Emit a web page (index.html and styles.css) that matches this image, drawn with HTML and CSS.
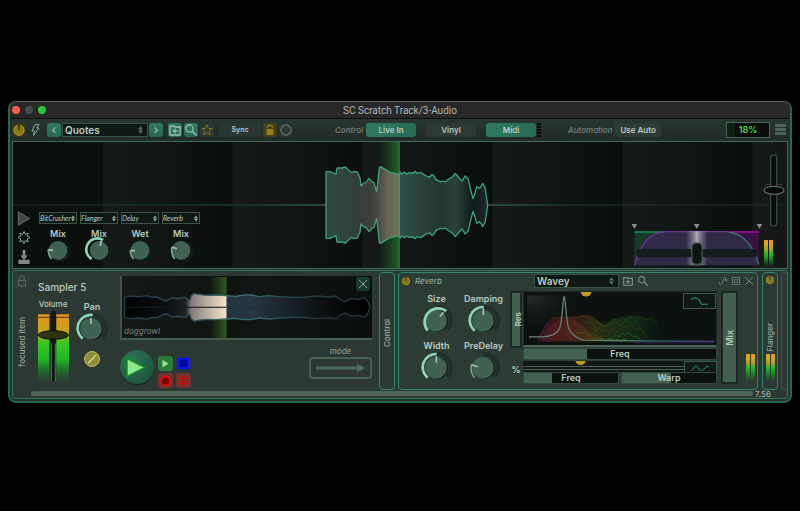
FILE: index.html
```html
<!DOCTYPE html>
<html lang="en">
<head>
<meta charset="utf-8">
<title>SC Scratch Track/3-Audio</title>
<link rel="stylesheet" href="styles.css">
</head>
<body>
<svg width="0" height="0" class="defs" aria-hidden="true">
  <defs>
    <linearGradient id="knobFill" x1="0" y1="0" x2="1" y2="1"><stop offset="0" stop-color="#3d6052"/><stop offset="1" stop-color="#446354"/></linearGradient>
    <symbol id="arrows" viewBox="0 0 6 9"><path d="M0 4 3 0l3 4zM0 5h6L3 9z" fill="currentColor"/></symbol>
    <symbol id="folder" viewBox="0 0 14 14"><path d="M2 3h4l1 1h5v8H2zM7 5.500v5M4.500 8h5" fill="none" stroke="currentColor" stroke-width="1.300"/></symbol>
    <symbol id="search" viewBox="0 0 14 14"><circle cx="5.500" cy="5.500" r="3.600" fill="none" stroke="currentColor" stroke-width="1.200"/><path d="M8.200 8.200 12.500 12.500" stroke="currentColor" stroke-width="1.600"/></symbol>
    <symbol id="power" viewBox="0 0 14 14"><circle cx="7" cy="7" r="5.500" fill="#877718"/><path d="M4.500 3a5 5 0 1 0 5 0" fill="none" stroke="#ab9723" stroke-width="1"/><path d="M7 1.500V7" stroke="#282b12" stroke-width="1.400"/></symbol>
    <symbol id="cross" viewBox="0 0 10 10"><path d="M1 1l8 8M9 1 1 9" stroke="currentColor" fill="none"/></symbol>
    <symbol id="knobBig" viewBox="0 0 96 84">
      <path d="M46 6A41 41 0 0 1 80 74" fill="none" stroke="#202d28" stroke-width="11"/>
      <circle cx="50" cy="48" r="32" fill="#15211c"/><circle cx="45" cy="47" r="32" fill="url(#knobFill)"/>
    </symbol>
  </defs>
</svg>
<main class="window">
  <header class="titlebar">
    <div class="lights"><i class="red"></i><i class="grey"></i><i class="green"></i></div>
    <h1>SC Scratch Track/3-Audio</h1>
    <div></div>
  </header>

  <nav class="toolbar" aria-label="Track">
    <div class="group">
      <button class="icon amber" aria-label="Power"><svg><use href="#power"/></svg></button>
      <button class="icon" aria-label="Flash"><svg viewBox="0 0 14 14"><path d="M7 1.500h4L8.500 5H11L5.500 12.500 6.500 8H4z" fill="none" stroke="#8ba79c"/></svg></button>
    </div>
    <div class="group preset">
      <button class="icon fill" aria-label="Previous">‹</button>
      <span class="pick"><select aria-label="Preset"><option>Quotes</option></select><svg><use href="#arrows"/></svg></span>
      <button class="icon fill" aria-label="Next">›</button>
    </div>
    <div class="group">
      <button class="icon fill" aria-label="Save"><svg><use href="#folder"/></svg></button>
      <button class="icon fill" aria-label="Search"><svg><use href="#search"/></svg></button>
      <button class="icon dim" aria-label="Favourite"><svg viewBox="0 0 14 14"><path d="M7 1.800 8.400 5.400 12.300 5.600 9.300 8 10.300 11.800 7 9.700 3.700 11.800 4.700 8 1.700 5.600 5.600 5.400z" fill="none" stroke="#80711e"/></svg></button>
    </div>
    <div class="group">
      <button class="sync">Sync</button>
      <button class="icon gold" aria-label="Lock"><svg viewBox="0 0 14 14"><path d="M3.500 6h7v6h-7z" fill="#927d18"/><path d="M4 4.500c1-3 5-3 6 0" fill="none" stroke="#927d18" stroke-width="1.300"/></svg></button>
      <button class="icon dim" aria-label="Record arm"><svg viewBox="0 0 14 14"><circle cx="7" cy="7" r="5" fill="none" stroke="#5d6a65" stroke-width="1.300"/></svg></button>
    </div>
    <div class="group modes">
      <span class="cap">Control</span>
      <button class="mode on">Live In</button>
      <button class="mode">Vinyl</button>
      <button class="mode on">Midi</button>
      <span class="dots"></span>
    </div>
    <div class="group auto"><span class="cap">Automation</span><button class="use">Use Auto</button></div>
    <div class="group end">
      <output class="percent">18%</output>
      <button class="menu" aria-label="Menu"><i></i><i></i><i></i></button>
    </div>
  </nav>

  <section class="deck">
    <svg class="layer" viewBox="-891 6 2322 378" preserveAspectRatio="none" aria-hidden="true">
      <defs>
        <linearGradient id="body" gradientUnits="userSpaceOnUse" x1="48" x2="532" y1="0" y2="0">
          <stop offset="0" stop-color="#2e4a41"/><stop offset=".18" stop-color="#304038"/><stop offset=".27" stop-color="#3c3d3c"/><stop offset=".32" stop-color="#474844"/><stop offset=".38" stop-color="#65645a"/><stop offset=".455" stop-color="#6b7458"/><stop offset=".458" stop-color="#2c5148"/><stop offset=".6" stop-color="#294139"/><stop offset=".72" stop-color="#22362f"/><stop offset=".8" stop-color="#2a433b"/><stop offset=".91" stop-color="#101a1a"/><stop offset="1" stop-color="#1c282d"/>
        </linearGradient>
        <linearGradient id="head"><stop offset="0" stop-color="#1c6528" stop-opacity="0"/><stop offset=".8" stop-color="#1f6429" stop-opacity=".75"/><stop offset="1" stop-color="#23732b"/></linearGradient>
        <linearGradient id="mid" gradientUnits="userSpaceOnUse" x1="-891" x2="1431" y1="0" y2="0"><stop offset="0" stop-color="#12221f"/><stop offset=".3" stop-color="#1c3932"/><stop offset=".4" stop-color="#315a4d"/><stop offset=".62" stop-color="#315a4d"/><stop offset=".72" stop-color="#1a2f2d"/><stop offset="1" stop-color="#172426"/></linearGradient>
        <path id="hull" d="M48 195V95H60L78 103 81 84H95L106 81 112 87 125 98 132 94 142 96 150 113 153 138 160 130 168 128 177 115 187 126 192 128 200 155 203 130 208 82 212 80 225 88 240 97 256 100 266 103 271 96 275 103 283 97 290 102 297 98 310 99 315 94 321 100 332 97 342 104 351 109 360 111 366 103 371 107 378 118 392 126 397 123 405 126 420 115 426 112 436 100 445 111 456 124 465 108 475 118 482 150 489 176 494 163 500 140 508 145 513 140 518 130 525 142 531 180 533 195"/>
      </defs>
      <path d="M-891 195H1431" stroke="url(#mid)" stroke-width="5"/>
      <path d="M205 6h65v378h-65z" fill="url(#head)"/>
      <g fill="url(#body)" stroke="#3f9e7a" stroke-width="4" stroke-linejoin="round"><use href="#hull"/><use href="#hull" transform="matrix(1 0 0 -1 0 390)"/></g>
      <path d="M265 104h5v182h-5z" fill="#727f5b"/>
    </svg>
    <div class="overlay">
      <div class="tools">
        <button aria-label="Play"><svg viewBox="0 0 14 16"><path d="M1 1v14l12-7z" fill="#454845" stroke="#6d726e"/></svg></button>
        <button aria-label="Settings"><svg viewBox="0 0 14 14"><path d="M7 1 8.300 3.800 11.200 2.800 10.200 5.700 13 7 10.200 8.300 11.200 11.200 8.300 10.200 7 13 5.700 10.200 2.800 11.200 3.800 8.300 1 7 3.800 5.700 2.800 2.800 5.700 3.800z" fill="none" stroke="#83a39a"/></svg></button>
        <button aria-label="Import"><svg viewBox="0 0 14 16"><path d="M5.500 1h3v6h2.500L7 11.500 3 7h2.500zM1 11.500h12V16H1z" fill="#838a86"/></svg></button>
      </div>
      <div class="sends">
        <div class="send"><span class="pick tiny"><select aria-label="Effect 1"><option>BitCrusher</option></select><svg><use href="#arrows"/></svg></span><label>Mix<svg class="small" viewBox="0 0 84 66"><circle cx="49" cy="34" r="31" fill="#111b17"/><circle cx="42" cy="31" r="28" fill="url(#knobFill)"/><path d="M23 57Q12 45 13 29" class="arc thin"/><path d="M13 29l14 2" class="hand"/></svg><input class="hit" type="range" value="18"></label></div>
        <div class="send"><span class="pick tiny"><select aria-label="Effect 2"><option>Flanger</option></select><svg><use href="#arrows"/></svg></span><label>Mix<svg class="small" viewBox="0 0 84 66"><circle cx="49" cy="34" r="31" fill="#111b17"/><circle cx="42" cy="31" r="28" fill="url(#knobFill)"/><path d="M20 57A33 33 0 0 1 54 0" class="arc"/><path d="M49 3l-4 14" class="hand"/></svg><input class="hit" type="range" value="54"></label></div>
        <div class="send"><span class="pick tiny"><select aria-label="Effect 3"><option>Delay</option></select><svg><use href="#arrows"/></svg></span><label>Wet<svg class="small" viewBox="0 0 84 66"><circle cx="49" cy="34" r="31" fill="#111b17"/><circle cx="42" cy="31" r="28" fill="url(#knobFill)"/><path d="M23 57Q12 45 13 31" class="arc thin"/><path d="M13 32h14" class="hand"/></svg><input class="hit" type="range" value="17"></label></div>
        <div class="send"><span class="pick tiny"><select aria-label="Effect 4"><option>Reverb</option></select><svg><use href="#arrows"/></svg></span><label>Mix<svg class="small" viewBox="0 0 84 66"><circle cx="49" cy="34" r="31" fill="#111b17"/><circle cx="42" cy="31" r="28" fill="url(#knobFill)"/><path d="M23 57Q11 42 15 21" class="arc thin"/><path d="M15 21l14 5" class="hand"/></svg><input class="hit" type="range" value="23"></label></div>
      </div>
      <label class="fader" aria-label="Crossfader"><svg viewBox="62 245 395 138" aria-hidden="true">
        <defs><linearGradient id="glow"><stop offset="0" stop-color="#fff" stop-opacity="0"/><stop offset=".35" stop-color="#fff" stop-opacity=".35"/><stop offset=".5" stop-color="#fff" stop-opacity=".6"/><stop offset=".65" stop-color="#fff" stop-opacity=".35"/><stop offset="1" stop-color="#fff" stop-opacity="0"/></linearGradient></defs>
        <path d="M72 276h186v102H72z" fill="#163a2b"/><path d="M258 276h187v102H258z" fill="#3a1240"/>
        <path d="M72 378Q98 279 165 277H355Q415 280 445 378z" fill="#312a46"/>
        <path d="M72 278H160" stroke="#147c48" stroke-width="6"/><path d="M355 278h90" stroke="#870e80" stroke-width="6"/>
        <path d="M72 378Q98 279 165 277H355" fill="none" stroke="#70359a" stroke-width="4"/><path d="M355 279Q415 282 445 375" fill="none" stroke="#37746e" stroke-width="4"/>
        <path d="M226 276h66v102h-66z" fill="url(#glow)"/>
        <rect x="78" y="329" width="362" height="25" rx="10" fill="#141c1d"/>
        <rect x="244" y="311" width="31" height="64" rx="12" fill="#0c1512" stroke="#465a50" stroke-width="4"/>
        <path d="M63 254h17l-8 14zM250 254h17l-8 14zM438 254h17l-8 14z" fill="#899087"/>
      </svg><input class="hit" type="range" value="50"></label>
      <div class="level">
        <label class="pitch" aria-label="Pitch"><svg viewBox="456 40 72 225" aria-hidden="true"><path d="M465 134h53" stroke="#4b3254" stroke-width="3"/><rect x="482" y="46" width="18" height="213" rx="8" fill="#080d0b" stroke="#33493f" stroke-width="4"/><ellipse cx="492" cy="152" rx="30" ry="12" fill="#050807" stroke="#4f6c5f" stroke-width="4"/></svg><input class="hit" type="range" value="50"></label>
        <div class="meter"><i></i><i></i></div>
      </div>
    </div>
  </section>

  <section class="rack">
    <div class="modules">
      <aside class="side">
        <button aria-label="Lock focus"><svg viewBox="0 0 14 14"><path d="M3.500 6.500h7V12h-7zM4.800 6V3.500Q7 0 9.200 3.500V6" fill="none" stroke="#596a62"/></svg></button>
        <span class="turn">focused item</span>
      </aside>
      <section class="sampler">
        <h2>Sampler 5</h2>
        <div class="cols">
          <label class="volume">Volume<svg viewBox="104 135 102 225" aria-hidden="true">
            <defs><linearGradient id="vu" x2="0" y2="1"><stop offset="0" stop-color="#e79018"/><stop offset=".25" stop-color="#c9a51f"/><stop offset=".42" stop-color="#35c920"/><stop offset=".65" stop-color="#1cb925"/><stop offset="1" stop-color="#1f7429" stop-opacity="0"/></linearGradient></defs>
            <path d="M110 148h34v208h-34zM165 148h38v208h-38z" fill="url(#vu)"/><path d="M108 157h96" stroke="#4c3d16" stroke-width="3"/><rect x="148" y="137" width="16" height="219" rx="8" fill="#111815"/><path d="M150 235v114q6 12 12 0V235" fill="none" stroke="#56705f" stroke-width="3"/><ellipse cx="156" cy="210" rx="45" ry="13" fill="#2f3310" stroke="#0b1009" stroke-width="3"/></svg><input class="hit" type="range" value="70"></label>
          <div class="pan">
            <label class="knob">Pan<svg viewBox="0 0 96 84"><use href="#knobBig"/><path d="M20 77A40 40 0 0 1 50 6" class="arc"/><path d="M45 16v16" class="hand"/></svg><input class="hit" type="range" value="50"></label>
            <button class="bypass" aria-label="Bypass"><svg viewBox="0 0 18 18"><circle cx="9" cy="9" r="7.500" fill="#8f8d3c" stroke="#c2bf5f"/><path d="M5 13l8-8" stroke="#d9d678" stroke-width="1.500"/></svg></button>
          </div>
        </div>
      </section>
      <section class="clip">
        <div class="view">
          <svg class="layer" viewBox="20 33 748 186" preserveAspectRatio="none" aria-hidden="true">
            <defs>
              <linearGradient id="dogfill" gradientUnits="userSpaceOnUse" x1="28" x2="762" y1="0" y2="0"><stop offset="0" stop-color="#020303"/><stop offset=".18" stop-color="#0b1012"/><stop offset=".25" stop-color="#1d2325"/><stop offset=".27" stop-color="#807c78"/><stop offset=".35" stop-color="#c4b8aa"/><stop offset=".414" stop-color="#f7e0c8"/><stop offset=".416" stop-color="#223544"/><stop offset=".52" stop-color="#273640"/><stop offset=".75" stop-color="#101719"/><stop offset=".9" stop-color="#050707"/><stop offset="1" stop-color="#000"/></linearGradient>
              <linearGradient id="doghead"><stop offset="0" stop-color="#315719" stop-opacity="0"/><stop offset="1" stop-color="#31571d"/></linearGradient>
              <linearGradient id="dogline" gradientUnits="userSpaceOnUse" x1="28" x2="762" y1="0" y2="0"><stop offset="0" stop-color="#263844"/><stop offset=".3" stop-color="#39545d"/><stop offset=".45" stop-color="#3a716d"/><stop offset=".65" stop-color="#2c5259"/><stop offset=".8" stop-color="#29373f"/></linearGradient>
              <path id="dog" d="M28 127V97L45 93 70 95 95 92 110 97 125 96 140 104 152 108 170 99 190 100 210 97 222 108 228 92 235 86 270 91 300 90 330 92 360 94 385 90 408 90 430 95 460 92 490 95 530 97 560 97 600 93 640 96 660 93 675 105 688 110 705 101 730 103 745 97 755 108 762 127"/>
            </defs>
            <path d="M283 36h50v183h-50z" fill="url(#doghead)"/>
            <g fill="url(#dogfill)" stroke="url(#dogline)" stroke-width="4"><use href="#dog"/><use href="#dog" transform="matrix(1 0 0 -1 0 254)"/></g>
            <path d="M30 127H332" stroke="#141b1d" stroke-width="3"/>
          </svg>
          <div class="viewtop"><button class="close" aria-label="Close"><svg><use href="#cross"/></svg></button><span class="file">doggrowl</span></div>
        </div>
        <div class="transport">
          <button class="bigplay" aria-label="Play sample"><svg viewBox="0 0 34 34"><path d="M7 8.500v18L25 17.500z" fill="#8ee98b" stroke="#168d22" stroke-width="1.500"/></svg></button>
          <div class="pads">
            <button class="p-go" aria-label="Loop"><svg viewBox="0 0 15 15"><path d="M4.500 4v7.500l6-3.700z" fill="#96ea91"/></svg></button>
            <button class="p-stop" aria-label="Stop"><svg viewBox="0 0 15 15"><path d="M3 3h9v9H3z" fill="#00079b" stroke="#0713f2" stroke-width="2"/></svg></button>
            <button class="p-rec" aria-label="Record"><svg viewBox="0 0 15 15"><circle cx="7.500" cy="8" r="4.500" fill="#7d0303" stroke="#f50808" stroke-width="1.500"/></svg></button>
            <button class="p-del" aria-label="Delete"><svg viewBox="0 0 15 15"><path d="M5.500 3.500h4M3 5.500h9M4.500 8h6M3 10.500h9M5.500 12.500h4" stroke="#d80808" stroke-width="1.200" fill="none"/><path d="M7.500 3v10" stroke="#c00606" stroke-width="2"/></svg></button>
          </div>
          <div class="direction"><span class="cap">mode</span><button aria-label="Direction"><svg viewBox="0 0 50 10"><path d="M0 3.500h41V0.500L49.500 5 41 9.500V6.500H0z" fill="#4c6a5d"/></svg></button></div>
        </div>
      </section>
      <button class="slot"><span class="turn">Control</span></button>
      <section class="effect">
        <header>
          <button class="mini" aria-label="Reverb power"><svg><use href="#power"/></svg></button>
          <h3>Reverb</h3>
          <span class="pick wavey"><select aria-label="Reverb preset"><option>Wavey</option></select><svg><use href="#arrows"/></svg></span>
          <button class="sq" aria-label="Save preset"><svg><use href="#folder"/></svg></button>
          <button class="sq" aria-label="Find preset"><svg><use href="#search"/></svg></button>
          <div class="fxicons">
            <button class="sq" aria-label="Modulation"><svg viewBox="0 0 14 14"><path d="M1.500 8Q2.500 13 4 12 6 11 7 7T9 2t2 4 2-2" fill="none" stroke="currentColor" stroke-width="1.300"/></svg></button>
            <button class="sq" aria-label="Expand"><svg viewBox="0 0 14 14"><path d="M2 2h10v10H2zM5 5h4v4H5z" fill="none" stroke="currentColor" stroke-width="1.300"/></svg></button>
            <button class="sq" aria-label="Remove"><svg><use href="#cross"/></svg></button>
          </div>
        </header>
        <div class="fxbody">
          <div class="knobs">
            <label class="knob">Size<svg viewBox="0 0 96 84"><use href="#knobBig"/><path d="M20 77A41 41 0 0 1 76 18" class="arc"/><path d="M68 22 57 34" class="hand"/></svg><input class="hit" type="range" value="65"></label>
            <label class="knob">Damping<svg viewBox="0 0 96 84"><use href="#knobBig"/><path d="M20 77A40 40 0 0 1 47 6" class="arc"/><path d="M46 10v20" class="hand"/></svg><input class="hit" type="range" value="50"></label>
            <label class="knob">Width<svg viewBox="0 0 96 84"><use href="#knobBig"/><path d="M20 77A40 40 0 0 1 47 6" class="arc"/><path d="M46 12v20" class="hand"/></svg><input class="hit" type="range" value="50"></label>
            <label class="knob">PreDelay<svg viewBox="0 0 96 84"><use href="#knobBig"/><path d="M20 77Q6 62 10 37" class="arc thin"/><path d="M11 38l18 6" class="hand"/></svg><input class="hit" type="range" value="24"></label>
          </div>
          <div class="vside">
            <label class="vbar"><span class="turn">Res</span><input class="hit" type="range" value="100"></label>
            <span class="pc">%</span>
          </div>
          <div class="filters">
            <div class="graph">
              <svg viewBox="40 81 578 162" preserveAspectRatio="none" aria-hidden="true">
                <defs>
                  <linearGradient id="spec" gradientUnits="userSpaceOnUse" x1="80" x2="470" y1="0" y2="0"><stop offset="0" stop-color="#4c1c45"/><stop offset=".12" stop-color="#5c1f1e"/><stop offset=".35" stop-color="#57301a"/><stop offset=".45" stop-color="#4c4b13"/><stop offset=".6" stop-color="#29491a"/><stop offset=".78" stop-color="#143a1e"/><stop offset="1" stop-color="#0c1d14" stop-opacity="0"/></linearGradient>
                  <linearGradient id="floor" gradientUnits="userSpaceOnUse" x1="50" x2="612" y1="0" y2="0"><stop offset="0" stop-color="#718079"/><stop offset=".5" stop-color="#537a65"/><stop offset=".7" stop-color="#2c5c5c"/><stop offset="1" stop-color="#533b8a"/></linearGradient>
                  <radialGradient id="haze" cx="0" cy="0" r="1"><stop offset="0" stop-color="#262e2b"/><stop offset="1" stop-color="#0b110e" stop-opacity="0"/></radialGradient>
                </defs>
                <path d="M50 92h180v120H50z" fill="url(#haze)"/>
                <path d="M82 222 105 180 130 158 190 157 215 151 240 155 260 168 285 182 310 162 345 157 375 151 400 160 430 163 455 185 465 215 440 233H82z" fill="url(#spec)" opacity=".5"/>
                <path d="M95 225 110 190 140 168 190 165 225 190 245 215 290 230H95z" fill="url(#spec)" opacity=".6"/>
                <g fill="none" stroke="url(#spec)" stroke-width="2"><path d="M82 225 110 175 130 157 160 162 200 157 235 152 255 164 265 178 290 186 310 175 330 182 350 170 370 176 395 160 420 168 440 185 455 210"/><path d="M220 168 230 175 240 170 250 185 256 200 266 192 276 201 286 196 296 206 310 192 320 202 331 195 340 186 350 190 360 180 375 196 390 190 410 222" stroke="#404016"/><path d="M170 215 180 205 190 212 200 205 216 208 225 203 235 214 246 207 256 213 265 221 275 215" stroke="#6b4f12"/><path d="M265 180 280 172 295 178 308 162 320 175 335 160 345 170 358 155 370 165 385 160 395 152 410 165 425 160 440 180" stroke="#20401a"/><path d="M300 230 315 212 325 218 335 206 345 212 355 205 370 219 380 215 393 232" stroke="#1f6a36"/></g>
                <path d="M265 231l10-8 10 8 14-9 10 9 12-5 10 6 12-7 10 6" fill="none" stroke="#5f7818" stroke-width="2"/>
                <path d="M370 235H612" stroke="#231d42" stroke-width="7"/>
                <path d="M55 218H95Q137 217 148 190C156 166 157 94 161 94S166 166 174 190Q185 219 220 228L360 230 612 232" fill="none" stroke="url(#floor)" stroke-width="4"/>
                <path d="M211 81a16 14 0 0 0 32 0z" fill="#c19a25"/>
              </svg>
              <button class="shape" aria-label="Low pass"><svg viewBox="0 0 30 13"><path d="M7 5Q10 2 14 4 16 5 17 8T20 10H25" fill="none" stroke="#279368" stroke-width="1.300"/></svg></button>
            </div>
            <label class="bar f1"><span>Freq</span><input class="hit" type="range" value="33"></label>
            <div class="strip"><svg viewBox="0 0 192 9" preserveAspectRatio="none" aria-hidden="true"><path d="M52 0a5 4 0 0 0 10 0z" fill="#c19a25"/><path d="M0 5.500h192M0 8.500h192" stroke="#496457"/></svg><button class="shape low" aria-label="Band pass"><svg viewBox="0 0 30 8"><path d="M6 8Q8 7 9.500 4.500T12 3 16 8M17 8Q19 7 21 4.500 22.500 2 25 4" fill="none" stroke="#279368"/></svg></button></div>
            <div class="pair"><label class="bar f2"><span>Freq</span><input class="hit" type="range" value="30"></label><label class="bar f3"><span>Warp</span><input class="hit" type="range" value="50"></label></div>
          </div>
          <label class="vbar mix"><span class="turn">Mix</span><input class="hit" type="range" value="100"></label>
          <div class="meter"><i></i><i></i></div>
        </div>
      </section>
      <section class="slot flanger">
        <button class="mini" aria-label="Flanger power"><svg><use href="#power"/></svg></button>
        <span class="turn">Flanger</span>
        <div class="meter"><i></i><i></i></div>
      </section>
      <div class="stub"></div>
    </div>
    <footer><div class="scroll"></div><span>7.56</span></footer>
  </section>
</main>
</body>
</html>
```

FILE: styles.css
```css
* { box-sizing: border-box; margin: 0; }

body {
  padding: 101px 8px 0;
  background: #000;
  color: #b7ccc1;
  font: 500 9px/12px Inter, "Open Sans", sans-serif;
}

.defs { position: absolute; }
svg { display: block; }
button { border: 0; padding: 0; background: none; color: inherit; font: inherit; }
label { position: relative; }
.hit { position: absolute; inset: 0; width: 100%; height: 100%; opacity: 0; }

.window {
  border: 2px solid #28664f;
  border-top: 1px solid #626262;
  border-radius: 8px;
  overflow: hidden;
  background: #25312d;
}

.titlebar {
  display: grid;
  grid-template-columns: 1fr auto 1fr;
  align-items: center;
  height: 17px;
  background: #282828;
  border-bottom: 1px solid #0b0e0d;
}
.titlebar h1 { color: #b3b3b3; font: 400 10px/15px Roboto, sans-serif; }
.lights { display: flex; gap: 5px; padding-left: 2px; }
.lights i { width: 8px; height: 8px; border-radius: 50%; }
.red { background: #fb5b51; }
.grey { background: #474b49; }
.green { background: #2ac536; }

.toolbar {
  display: flex;
  align-items: center;
  height: 22px;
  padding: 0 4px 1px 2px;
  background: linear-gradient(#283530, #212b28);
}
.group { display: flex; align-items: center; gap: 2px; }
.group + .group { margin-left: 5px; }
.toolbar .modes { margin-left: 42px; gap: 10px; }
.toolbar .auto { margin-left: 27px; gap: 3px; }
.toolbar .end { margin-left: auto; gap: 5px; }

.icon {
  display: grid;
  place-items: center;
  width: 14px;
  height: 14px;
  border-radius: 3px;
  font-size: 12px;
  line-height: 12px;
}
.icon svg { width: 14px; height: 14px; }
.fill { background: linear-gradient(#2f7a60, #286851); color: #9ebfb2; }
.dim { background: #2b3834; }
.amber { background: #353818; }
.gold { background: #41401b; }
.sync { width: 42px; height: 14px; background: #2a3632; font-size: 7px; font-weight: 600; }
.preset { gap: 1px; }
.cap { color: #73807b; font-size: 8px; font-style: italic; }

.pick {
  display: flex;
  align-items: center;
  width: 86px;
  height: 14px;
  padding-right: 4px;
  border: 1px solid #385448;
  background: #101815;
}
.pick select {
  flex: 1;
  min-width: 0;
  padding: 0 0 0 2px;
  border: 0;
  appearance: none;
  background: none;
  color: #b7ccc1;
  font: 600 10px/12px Inter, sans-serif;
}
.pick svg { width: 5px; height: 8px; color: #577365; }

.mode {
  width: 50px;
  height: 14px;
  border-radius: 3px;
  background: #2c3935;
  font-size: 8px;
  font-weight: 600;
}
.on { background: linear-gradient(90deg, #2d7a61, #286c56); }
.modes .cap + .mode { margin-left: -7px; }
.dots { width: 4px; height: 14px; margin-left: -9px; background: repeating-linear-gradient(#050807 0 2px, #26322f 2px 3px); }
.use { height: 14px; padding: 0 5px; border-radius: 3px; background: #2e3b37; color: #b7ccc1; font-size: 8px; font-weight: 600; }
.percent {
  width: 44px;
  height: 16px;
  border: 1px solid #48675a;
  background: linear-gradient(90deg, #0d2012 18%, #090e0c 18%);
  color: #50d355;
  font-weight: 600;
  line-height: 14px;
  text-align: center;
}
.menu { display: grid; gap: 1px; width: 11px; }
.menu i { height: 3px; background: #4d625a; }

.deck {
  display: grid;
  height: 128px;
  margin: 0 2px;
  border: 1px solid #40695a;
  background: linear-gradient(90deg, #0b0f0e 90px, transparent 90px), repeating-linear-gradient(90deg, #161a18 90px, #0a0e0d 219px, #161a18 220px);
}
.layer, .overlay { grid-area: 1 / 1; min-width: 0; }
.layer { width: 100%; height: 100%; }
.overlay { display: flex; align-items: flex-end; padding: 0 1px 1px 4px; }
.tools { display: grid; gap: 4px; width: 15px; padding-bottom: 3px; }
.tools button, .tools svg { width: 14px; height: 15px; }
.sends { display: flex; gap: 3px; margin: 0 auto 5px 7px; }
.send { width: 38px; }
.tiny { width: 38px; height: 12px; padding-right: 1px; }
.tiny select { padding: 0; font: italic 400 7px/10px Lato, sans-serif; text-overflow: clip; }
.tiny svg { width: 4px; height: 7px; color: #90a99d; }
.send label { display: grid; justify-items: center; margin-top: 4px; font-weight: 600; line-height: 12px; }
.small { width: 28px; height: 22px; overflow: visible; }
.arc { fill: none; stroke: #8dd6b4; stroke-width: 8; }
.arc.thin { stroke: #6fa78d; stroke-width: 5; }
.hand { fill: none; stroke: #adbdb4; stroke-width: 5; }
.fader svg { width: 132px; height: 46px; }
.level { display: grid; align-content: end; justify-items: center; width: 24px; gap: 12px; margin-left: -1px; }
.pitch svg { width: 24px; height: 75px; }
.meter {
  display: flex;
  gap: 1px;
  width: 9px;
  height: 27px;
}
.meter i { flex: 1; background: linear-gradient(#eb9416, #d8a820 15%, #a2a223 35%, #29bc21 50%, #1a9825 65%, transparent); }
.level .meter { margin-right: 12px; }

.rack {
  margin: 1px 2px 2px;
  border: 1px solid #2c795c;
  border-radius: 3px;
  background: #2b3833;
}
.modules { display: flex; height: 119px; padding-top: 1px; }
.side { display: flex; flex-direction: column; align-items: center; gap: 29px; width: 18px; padding-top: 2px; color: #8fa69a; font-size: 8px; }
.side button { background: #313d39; border-radius: 2px; }
.side svg { width: 14px; height: 14px; }
.turn { writing-mode: vertical-rl; transform: rotate(180deg); white-space: nowrap; }

.sampler { width: 82px; padding-left: 5px; }
.sampler h2 { padding: 9px 0 5px 2px; font-size: 10px; line-height: 12px; font-weight: 500; }
.cols { display: flex; gap: 6px; }
.volume { display: grid; justify-items: center; width: 34px; font-size: 8px; line-height: 12px; }
.volume svg { width: 34px; height: 75px; }
.pan { display: grid; align-content: start; justify-items: center; gap: 9px; padding-top: 3px; }
.knob { display: grid; justify-items: center; font-weight: 600; line-height: 12px; }
.knob svg { width: 32px; height: 28px; }
.bypass svg { width: 18px; height: 18px; }

.clip { width: 252px; margin-left: 7px; padding-top: 4px; }
.view {
  display: grid;
  height: 64px;
  border-left: 2px solid #3e5448;
  border-bottom: 2px solid #465d50;
  background: linear-gradient(90deg, #151a18, #0e1412 40%, #111513 55%, #0a0f0d);
}
.viewtop { grid-area: 1 / 1; display: grid; align-content: space-between; padding: 1px 2px; }
.close { justify-self: end; display: grid; place-items: center; width: 14px; height: 14px; border-radius: 3px; background: #173b2f; color: #93a59c; }
.close svg { width: 10px; height: 10px; }
.file { color: #6a726d; font-size: 8px; font-style: italic; line-height: 12px; }
.transport { display: flex; padding-top: 5px; }
.bigplay { width: 34px; height: 34px; margin-top: 5px; border-radius: 50%; background: radial-gradient(circle at 35% 30%, #2a7657, #1c4b37); box-shadow: 0 1px 1px #18221e; }
.pads { display: grid; grid-template-columns: 15px 15px; gap: 2px 3px; align-content: start; margin: 11px 0 0 4px; }
.pads button { height: 15px; border-radius: 3px; }
.pads svg { width: 15px; height: 15px; }
.p-go { background: #2b7a39; }
.p-stop { background: #27334b; }
.p-rec, .p-del { background: #75312d; }
.direction { display: grid; align-content: start; justify-items: center; width: 63px; margin-left: auto; }
.direction .cap { color: #82978c; }
.direction button { width: 63px; height: 22px; border: 2px solid #466154; border-radius: 4px; display: grid; place-items: center; }
.direction svg { width: 50px; height: 10px; }

.slot {
  width: 16px;
  height: 118px;
  margin-left: 7px;
  border: 1px solid #31876a;
  border-radius: 4px;
  color: #94aa9f;
  font-size: 8px;
}
.slot .turn { margin: 8px auto 0; }

.effect { flex: 1; height: 118px; margin-left: 3px; border: 1px solid #31876a; border-radius: 4px; background: #2d3b35; }
.effect header { display: flex; align-items: center; height: 16px; padding: 0 1px 0 2px; }
.mini svg { width: 10px; height: 10px; }
.effect h3 { margin-left: 4px; color: #90a69b; font-size: 8px; font-style: italic; font-weight: 500; }
.wavey { width: 85px; margin: 0 2px 0 auto; }
.sq { color: #81918a; width: 14px; height: 14px; }
.sq + .sq { margin-left: 1px; }
.sq svg { width: 12px; height: 12px; margin: 1px; }
.fxicons { display: flex; margin-left: 67px; }
.fxicons .sq { width: 13px; margin: 0; color: #6b7d75; }
.fxicons svg { width: 10px; height: 10px; }

.fxbody { display: flex; padding: 2px 0 0; }
.knobs { display: grid; grid-template-columns: 47px 47px; align-content: start; row-gap: 7px; width: 96px; margin: 2px 0 0 14px; }
.vside { display: grid; align-content: start; justify-items: center; gap: 17px; width: 12px; margin-left: auto; }
.vbar { display: grid; place-items: center; width: 12px; height: 57px; border: 2px solid #1d2824; background: #42604f; color: #b7ccc1; font-size: 8px; font-weight: 600; }
.pc { line-height: 10px; font-weight: 600; }
.filters { display: grid; align-content: start; flex: 0 1 194px; margin-left: 1px; }
.graph { display: grid; height: 56px; border: 1px solid #1d2824; border-bottom: 2px solid #4b6559; background: #0c120f; }
.graph > svg { grid-area: 1 / 1; width: 100%; height: 53px; }
.shape { grid-area: 1 / 1; justify-self: end; align-self: start; width: 33px; height: 16px; border: 1px solid #3d5a4c; background: #111916; }
.graph .shape { margin-top: 1px; }
.shape svg { width: 29px; height: 12px; }
.bar { display: grid; place-items: center; height: 12px; border: 1px solid #304a3e; background: #0b110e; font-size: 9px; font-weight: 600; line-height: 10px; }
.f1 { margin-top: 1px; background: linear-gradient(90deg, #436151 33%, #0b110e 33%); }
.f2 { background: linear-gradient(90deg, #436151 30%, #0b110e 30%); }
.f3 { background: linear-gradient(90deg, #436151 52%, #0b110e 52%); }
.strip { display: grid; height: 11px; margin-top: 1px; background: #101714; }
.strip > svg { grid-area: 1 / 1; width: 100%; height: 9px; }
.strip .shape { height: 11px; border-bottom: 0; }
.low svg { height: 8px; }
.pair { display: grid; grid-template-columns: 1fr 1fr; gap: 2px; }
.mix { width: 17px; height: 93px; margin-left: 4px; font-size: 9px; }
.fxbody > .meter { align-self: end; margin: 0 2px 3px 8px; }

.flanger { display: flex; flex-direction: column; align-items: center; margin-left: 4px; padding-top: 2px; }
.flanger .turn { margin: 38px 0 0; }
.flanger .meter { margin-top: 2px; }
.stub { width: 6px; height: 118px; margin-left: 3px; border: 1px solid #3c4d46; border-right: 0; border-radius: 4px 0 0 4px; }

footer { display: flex; align-items: center; height: 8px; padding: 0 16px 1px 18px; }
.scroll { flex: 1; height: 5px; border-radius: 3px; background: #4c6558; }
footer span { margin-left: 2px; color: #9caea5; font-size: 8px; line-height: 8px; }
```
